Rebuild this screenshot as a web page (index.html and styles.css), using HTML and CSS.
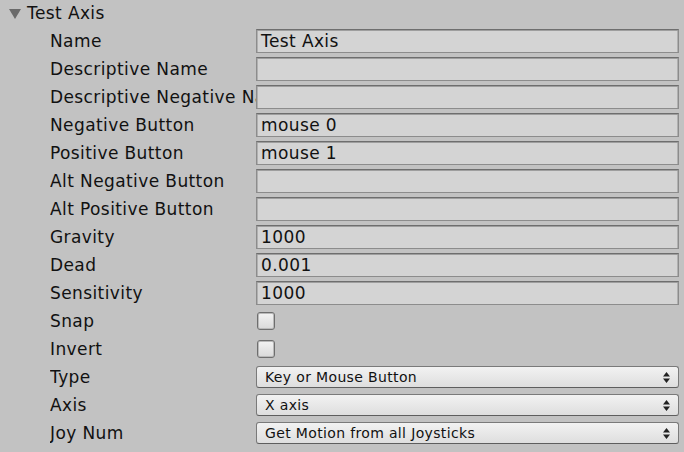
FILE: index.html
```html
<!DOCTYPE html>
<html>
<head>
<meta charset="utf-8">
<link rel="stylesheet" href="styles.css">
</head>
<body>
<div class="panel">
  <div class="header">
    <span class="foldout"></span>
    <span class="title">Test Axis</span>
  </div>
  <div class="row"><div class="label">Name</div><div class="field">Test Axis</div></div>
  <div class="row"><div class="label">Descriptive Name</div><div class="field"></div></div>
  <div class="row"><div class="label">Descriptive Negative Name</div><div class="field"></div></div>
  <div class="row"><div class="label">Negative Button</div><div class="field">mouse 0</div></div>
  <div class="row"><div class="label">Positive Button</div><div class="field">mouse 1</div></div>
  <div class="row"><div class="label">Alt Negative Button</div><div class="field"></div></div>
  <div class="row"><div class="label">Alt Positive Button</div><div class="field"></div></div>
  <div class="row"><div class="label">Gravity</div><div class="field">1000</div></div>
  <div class="row"><div class="label">Dead</div><div class="field">0.001</div></div>
  <div class="row"><div class="label">Sensitivity</div><div class="field">1000</div></div>
  <div class="row"><div class="label">Snap</div><div class="check"></div></div>
  <div class="row"><div class="label">Invert</div><div class="check"></div></div>
  <div class="row"><div class="label">Type</div><div class="popup"><span>Key or Mouse Button</span><svg class="arrows" width="7" height="11" viewBox="0 0 7 11"><path d="M3.5 0 L7 4.5 L0 4.5 Z M0 6.5 L7 6.5 L3.5 11 Z" fill="#222"/></svg></div></div>
  <div class="row"><div class="label">Axis</div><div class="popup"><span>X axis</span><svg class="arrows" width="7" height="11" viewBox="0 0 7 11"><path d="M3.5 0 L7 4.5 L0 4.5 Z M0 6.5 L7 6.5 L3.5 11 Z" fill="#222"/></svg></div></div>
  <div class="row"><div class="label">Joy Num</div><div class="popup"><span>Get Motion from all Joysticks</span><svg class="arrows" width="7" height="11" viewBox="0 0 7 11"><path d="M3.5 0 L7 4.5 L0 4.5 Z M0 6.5 L7 6.5 L3.5 11 Z" fill="#222"/></svg></div></div>
</div>
</body>
</html>
```
FILE: styles.css
```css
html, body {
  margin: 0;
  padding: 0;
  background: #c2c2c2;
  width: 684px;
  height: 452px;
  overflow: hidden;
}
.panel {
  font-family: "DejaVu Sans", Verdana, sans-serif;
  font-size: 17px;
  letter-spacing: 0.4px;
  color: #111;
  display: flex;
  flex-direction: column;
}
.header {
  height: 27px;
  display: flex;
  align-items: center;
  padding-left: 9px;
}
.foldout {
  width: 0;
  height: 0;
  border-left: 6px solid transparent;
  border-right: 6px solid transparent;
  border-top: 10px solid #6a6a6a;
  margin-right: 6px;
}
.title {
  line-height: 27px;
}
.row {
  height: 28px;
  display: flex;
  align-items: center;
  padding-left: 50px;
  padding-right: 5px;
}
.label {
  width: 206px;
  flex: none;
  white-space: nowrap;
  overflow: hidden;
}
.field {
  flex: 1;
  height: 24px;
  box-sizing: border-box;
  background: #d4d4d4;
  border: 1px solid #8c8c8c;
  border-top-color: #6e6e6e;
  box-shadow: inset 0 1px 0 #9e9e9e, inset 1px 0 0 #b0b0b0, inset -1px 0 0 #b0b0b0;
  padding-left: 4px;
  line-height: 22px;
  white-space: nowrap;
  overflow: hidden;
}
.check {
  width: 18px;
  height: 18px;
  box-sizing: border-box;
  margin-left: 1px;
  border: 1px solid #6e6e6e;
  border-radius: 3px;
  background: linear-gradient(#f3f3f3, #d9d9d9);
  box-shadow: inset 0 0 0 1px #b9b9b9;
}
.popup {
  flex: 1;
  height: 22px;
  box-sizing: border-box;
  border: 1px solid #7a7a7a;
  border-bottom-color: #5e5e5e;
  border-radius: 3px;
  background: linear-gradient(#f2f2f2, #dedede);
  display: flex;
  align-items: center;
  justify-content: space-between;
  padding: 0 8px 0 8px;
  font-size: 14px;
  letter-spacing: 0.35px;
  white-space: nowrap;
}
.arrows {
  flex: none;
}
```
